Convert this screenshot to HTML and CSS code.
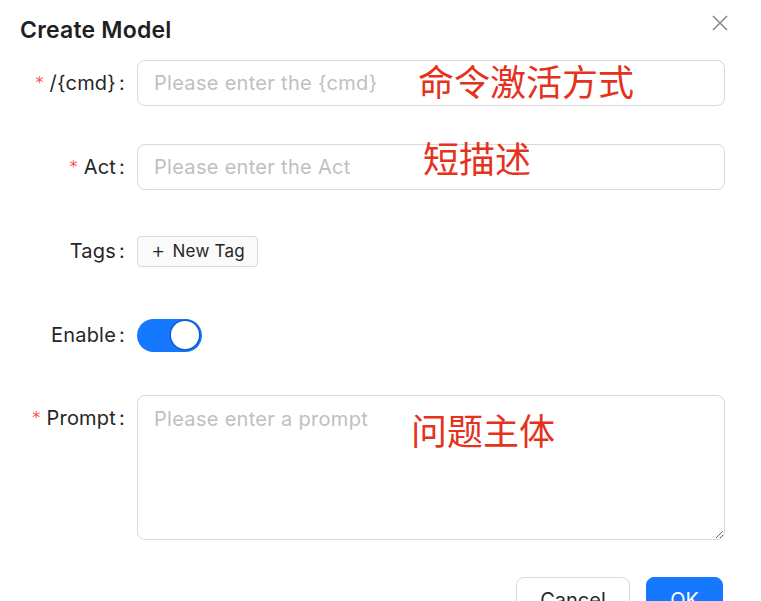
FILE: index.html
```html
<!DOCTYPE html>
<html lang="en">
<head>
<meta charset="utf-8">
<title>Create Model</title>
<link rel="stylesheet" href="styles.css">
</head>
<body>
<div class="modal">
  <div class="header">
    <div class="title">Create Model</div>
    <button class="close" aria-label="Close">
      <svg width="16" height="16" viewBox="0 0 16 16"><path d="M1 1 L15 15 M15 1 L1 15" stroke="#8c8c8c" stroke-width="1.6" fill="none"/></svg>
    </button>
  </div>
  <form class="form">
    <div class="row">
      <label class="label"><span class="req">*</span>/{cmd}<span class="colon">:</span></label>
      <div class="control"><input class="input" placeholder="Please enter the {cmd}"></div>
    </div>
    <div class="row">
      <label class="label"><span class="req">*</span>Act<span class="colon">:</span></label>
      <div class="control"><input class="input" placeholder="Please enter the Act"></div>
    </div>
    <div class="row">
      <label class="label">Tags<span class="colon">:</span></label>
      <div class="control"><span class="tag-btn"><span class="plus">+</span>New Tag</span></div>
    </div>
    <div class="row">
      <label class="label">Enable<span class="colon">:</span></label>
      <div class="control"><span class="switch"><span class="knob"></span></span></div>
    </div>
    <div class="row row-top">
      <label class="label"><span class="req">*</span>Prompt<span class="colon">:</span></label>
      <div class="control"><textarea class="textarea" placeholder="Please enter a prompt"></textarea></div>
    </div>
  </form>
  <div class="footer">
    <button class="btn btn-cancel">Cancel</button>
    <button class="btn btn-primary">OK</button>
  </div>
  <span class="note note1">命令激活方式</span>
  <span class="note note2">短描述</span>
  <span class="note note3">问题主体</span>
</div>
</body>
</html>
```

FILE: styles.css
```css
* { box-sizing: border-box; }
html, body { margin: 0; background: #fff; }
body {
  font-family: Inter, "Noto Sans", "Noto Sans CJK SC", sans-serif;
  color: #262626;
  width: 761px;
  height: 601px;
  overflow: hidden;
}
.modal {
  position: relative;
  padding: 15px 36px 0 20px;
}
.header {
  display: flex;
  justify-content: space-between;
  align-items: center;
  height: 30px;
  margin-bottom: 15px;
}
.title {
  font-size: 23px;
  font-weight: 600;
  line-height: 30px;
  color: #1f1f1f;
  letter-spacing: 0.2px;
}
.close {
  border: 0;
  background: none;
  padding: 0;
  margin-right: -3px;
  margin-top: -14px;
  width: 16px;
  height: 16px;
  display: flex;
}
.form { display: flex; flex-direction: column; }
.row {
  display: grid;
  grid-template-columns: 117px 1fr;
  align-items: center;
  min-height: 46px;
  margin-bottom: 38px;
}
.row-top { align-items: start; margin-bottom: 37px; }
.row:nth-child(4) { margin-bottom: 37px; }
.label {
  font-size: 20px;
  line-height: 46px;
  height: 46px;
  text-align: right;
  padding-right: 12px;
  color: #262626;
  white-space: nowrap;
  letter-spacing: 0.2px;
}
.req {
  color: #ff4d4f;
  font-size: 16px;
  margin-right: 6px;
  font-family: "DejaVu Sans", sans-serif;
  position: relative;
  top: -2px;
}
.colon { margin-left: 3px; }
.input, .textarea {
  width: 100%;
  border: 1px solid #d9d9d9;
  border-radius: 8px;
  font-family: inherit;
  font-size: 20px;
  letter-spacing: 0.3px;
  color: #262626;
  outline: none;
  background: #fff;
}
.input { height: 46px; padding: 0 16px; }
.textarea {
  height: 145px;
  padding: 10px 16px;
  line-height: 27px;
  resize: vertical;
  display: block;
}
.input::placeholder, .textarea::placeholder { color: #bfbfbf; }
.tag-btn {
  display: inline-flex;
  align-items: center;
  height: 31px;
  padding: 0 12px 0 13px;
  border: 1px solid #d9d9d9;
  border-radius: 4px;
  background: #fafafa;
  font-size: 17px;
  color: #262626;
  letter-spacing: 0.2px;
}
.plus {
  font-size: 22px;
  font-weight: 300;
  margin-right: 7px;
  line-height: 1;
  position: relative;
  top: -1px;
}
.switch {
  display: inline-flex;
  justify-content: flex-end;
  align-items: center;
  width: 65px;
  height: 33px;
  border-radius: 17px;
  background: #1677ff;
  padding: 0 3px;
  vertical-align: middle;
}
.knob {
  width: 28px;
  height: 28px;
  border-radius: 50%;
  background: #fff;
  box-shadow: 0 0 0 1.5px #0f5ccc;
}
.footer {
  display: flex;
  justify-content: flex-end;
  gap: 16px;
  padding-right: 2px;
}
.btn {
  height: 46px;
  padding: 0;
  border: 1px solid #d9d9d9;
  border-radius: 8px;
  background: #fff;
  font-family: inherit;
  font-size: 20px;
  color: #262626;
}
.btn-cancel { width: 114px; }
.btn-primary {
  width: 77px;
  background: #1677ff;
  border-color: #1677ff;
  color: #fff;
}
.note {
  position: absolute;
  font-family: "Noto Sans CJK SC", sans-serif;
  font-size: 36px;
  line-height: 1;
  color: #e5321d;
  font-weight: 400;
}
.note1 { left: 418px; top: 62px; }
.note2 { left: 423px; top: 139px; }
.note3 { left: 411px; top: 411px; }
```
